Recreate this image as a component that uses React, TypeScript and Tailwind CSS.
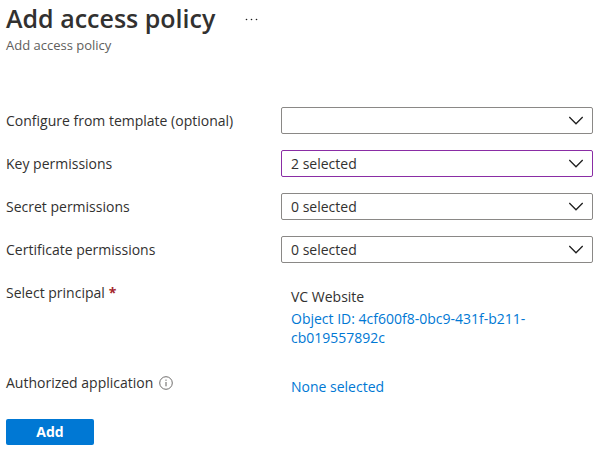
import type { ReactNode } from "react";

function ChevronDown() {
  return (
    <svg
      className="pointer-events-none absolute top-1/2 right-2 -translate-y-1/2"
      width="18"
      height="13"
      viewBox="0 0 18 13"
      fill="none"
      stroke="#1f1f1f"
      strokeWidth="1.3"
      aria-hidden="true"
    >
      <path d="M2.3 2.5 L9 9.3 L15.7 2.5" />
    </svg>
  );
}

function InfoIcon() {
  return (
    <svg width="14" height="14" viewBox="0 0 14 14" fill="none" stroke="#605e5c" aria-hidden="true">
      <circle cx="7" cy="7" r="6.3" strokeWidth="0.9" />
      <path d="M7 6v4.3M7 3.6v1.2" strokeWidth="1" />
    </svg>
  );
}

type SelectRowProps = { id: string; label: string; value: string; edited?: boolean };

function SelectRow({ id, label, value, edited }: SelectRowProps) {
  return (
    <div className="grid grid-cols-[275px_1fr] items-center">
      <label htmlFor={id}>{label}</label>
      <div className="relative">
        <select
          id={id}
          defaultValue={value}
          className={`block h-[27px] w-full appearance-none rounded-xs border bg-white pr-8 pl-[9px] outline-none ${
            edited ? "border-[#8a2da5]" : "border-[#8a8886]"
          }`}
        >
          <option value={value}>{value}</option>
        </select>
        <ChevronDown />
      </div>
    </div>
  );
}

function DetailRow({ label, children }: { label: ReactNode; children: ReactNode }) {
  return (
    <div className="grid grid-cols-[275px_1fr] items-start">
      <div className="flex items-center">{label}</div>
      <div className="pt-1 pl-[10px]">{children}</div>
    </div>
  );
}

export default function App() {
  return (
    <main className="min-h-screen bg-white pr-[11px] pb-3 pl-[6px] font-['Open_Sans','Noto_Sans',sans-serif] text-sm leading-5 text-[#323130]">
      <header>
        <div className="flex items-center gap-[30px] pt-[2px]">
          <h1 className="text-[25px] leading-8 font-semibold text-[#323130]">Add access policy</h1>
          <button type="button" aria-label="More options" className="flex h-8 items-center pt-[2px]">
            <svg width="14" height="4" viewBox="0 0 14 4" fill="#1f1f1f" aria-hidden="true">
              <circle cx="1.5" cy="2.5" r="0.8" />
              <circle cx="6.5" cy="2.5" r="0.8" />
              <circle cx="11.5" cy="2.5" r="0.8" />
            </svg>
          </button>
        </div>
        <p className="pt-[3px] text-[13px] leading-4 text-[#605e5c]">Add access policy</p>
      </header>

      <form className="pt-[54px]">
        <div className="flex flex-col gap-4">
          <SelectRow id="template" label="Configure from template (optional)" value="" />
          <SelectRow id="key" label="Key permissions" value="2 selected" edited />
          <SelectRow id="secret" label="Secret permissions" value="0 selected" />
          <SelectRow id="certificate" label="Certificate permissions" value="0 selected" />
        </div>

        <div className="flex flex-col gap-[26px] pt-5">
          <DetailRow
            label={
              <>
                Select principal <span className="pl-1 font-bold text-[#a4262c]">*</span>
              </>
            }
          >
            <p>VC Website</p>
            <a href="#principal" className="block max-w-[250px] pt-[2px] leading-[19px] text-[#0078d4]">
              Object ID: 4cf600f8-0bc9-431f-b211-cb019557892c
            </a>
          </DetailRow>
          <DetailRow
            label={
              <>
                <span className="pr-[6px]">Authorized application</span>
                <InfoIcon />
              </>
            }
          >
            <a href="#application" className="text-[#0078d4]">
              None selected
            </a>
          </DetailRow>
        </div>

        <button
          type="button"
          className="mt-[22px] block h-[26px] w-[88px] rounded-xs bg-[#0078d4] font-bold text-white"
        >
          Add
        </button>
      </form>
    </main>
  );
}
